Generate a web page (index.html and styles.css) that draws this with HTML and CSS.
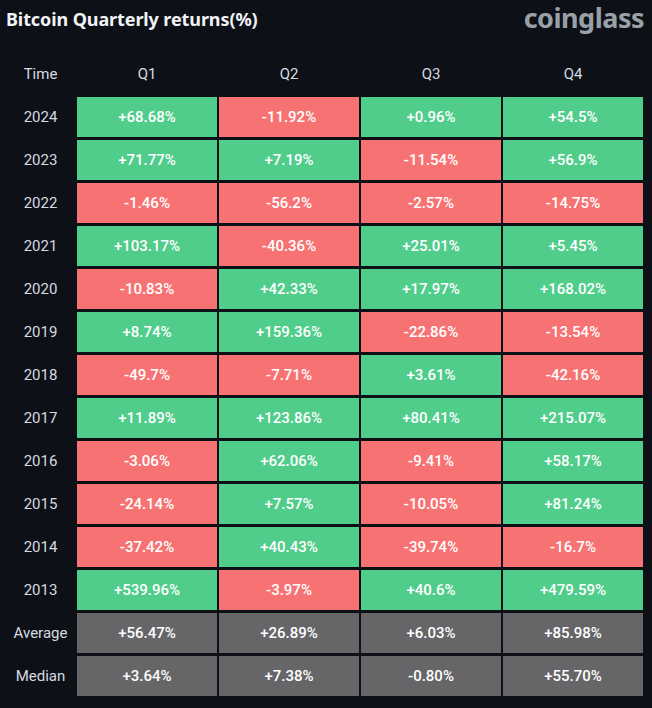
FILE: index.html
```html
<!DOCTYPE html>
<html>
<head>
<meta charset="utf-8">
<link rel="stylesheet" href="styles.css">
</head>
<body>
<div class="page">
  <div class="top">
    <div class="title">Bitcoin Quarterly returns(%)</div>
    <div class="brand">coinglass</div>
  </div>
  <div class="table">
    <div class="h">Time</div><div class="h">Q1</div><div class="h">Q2</div><div class="h">Q3</div><div class="h">Q4</div>
    <div class="y">2024</div><div class="c up">+68.68%</div><div class="c dn">-11.92%</div><div class="c up">+0.96%</div><div class="c up">+54.5%</div>
    <div class="y">2023</div><div class="c up">+71.77%</div><div class="c up">+7.19%</div><div class="c dn">-11.54%</div><div class="c up">+56.9%</div>
    <div class="y">2022</div><div class="c dn">-1.46%</div><div class="c dn">-56.2%</div><div class="c dn">-2.57%</div><div class="c dn">-14.75%</div>
    <div class="y">2021</div><div class="c up">+103.17%</div><div class="c dn">-40.36%</div><div class="c up">+25.01%</div><div class="c up">+5.45%</div>
    <div class="y">2020</div><div class="c dn">-10.83%</div><div class="c up">+42.33%</div><div class="c up">+17.97%</div><div class="c up">+168.02%</div>
    <div class="y">2019</div><div class="c up">+8.74%</div><div class="c up">+159.36%</div><div class="c dn">-22.86%</div><div class="c dn">-13.54%</div>
    <div class="y">2018</div><div class="c dn">-49.7%</div><div class="c dn">-7.71%</div><div class="c up">+3.61%</div><div class="c dn">-42.16%</div>
    <div class="y">2017</div><div class="c up">+11.89%</div><div class="c up">+123.86%</div><div class="c up">+80.41%</div><div class="c up">+215.07%</div>
    <div class="y">2016</div><div class="c dn">-3.06%</div><div class="c up">+62.06%</div><div class="c dn">-9.41%</div><div class="c up">+58.17%</div>
    <div class="y">2015</div><div class="c dn">-24.14%</div><div class="c up">+7.57%</div><div class="c dn">-10.05%</div><div class="c up">+81.24%</div>
    <div class="y">2014</div><div class="c dn">-37.42%</div><div class="c up">+40.43%</div><div class="c dn">-39.74%</div><div class="c dn">-16.7%</div>
    <div class="y">2013</div><div class="c up">+539.96%</div><div class="c dn">-3.97%</div><div class="c up">+40.6%</div><div class="c up">+479.59%</div>
    <div class="y">Average</div><div class="c st">+56.47%</div><div class="c st">+26.89%</div><div class="c st">+6.03%</div><div class="c st">+85.98%</div>
    <div class="y">Median</div><div class="c st">+3.64%</div><div class="c st">+7.38%</div><div class="c st">-0.80%</div><div class="c st">+55.70%</div>
  </div>
</div>
</body>
</html>
```
FILE: styles.css
```css
html, body {
  margin: 0;
  padding: 0;
  background: #0d1017;
}
.page {
  width: 652px;
  height: 708px;
  background: #0d1017;
  font-family: Roboto, "Noto Sans", sans-serif;
}
.top {
  display: flex;
  justify-content: space-between;
  align-items: flex-start;
  height: 54px;
  padding: 0 8px 0 6px;
  box-sizing: border-box;
}
.title {
  color: #f2f3f5;
  font-family: "Noto Sans", sans-serif;
  font-weight: 700;
  font-size: 18px;
  line-height: 24px;
  padding-top: 7px;
  letter-spacing: -0.1px;
}
.brand {
  color: #9aa0a8;
  font-family: "Noto Sans", sans-serif;
  font-weight: 700;
  font-size: 27px;
  line-height: 36px;
  letter-spacing: -0.5px;
}
.table {
  display: grid;
  grid-template-columns: 69px repeat(4, 140px);
  grid-auto-rows: 40px;
  column-gap: 2px;
  row-gap: 3px;
  margin-left: 6px;
}
.table > div {
  display: flex;
  align-items: center;
  justify-content: center;
  font-size: 15px;
}
.h, .y {
  color: #d6dae1;
}
.c {
  color: #ffffff;
  font-weight: 500;
}
.up { background: #50cd8b; }
.dn { background: #f77373; }
.st { background: #666668; }
```
